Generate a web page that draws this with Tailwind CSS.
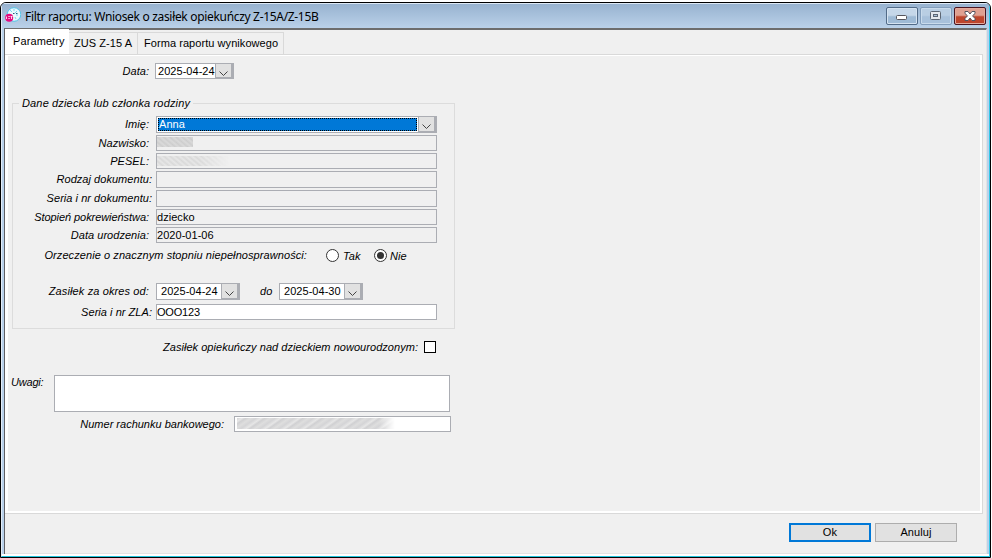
<!DOCTYPE html>
<html lang="pl">
<head>
  <meta charset="UTF-8">
  <meta name="viewport" content="width=device-width, initial-scale=1.0">
  <title>Filtr raportu</title>
  <script src="https://cdn.jsdelivr.net/npm/@tailwindcss/browser@4"></script>
</head>
<body class="w-[992px] h-[558px] overflow-hidden bg-white pt-[2px] font-['Liberation_Sans',sans-serif] text-[11px] leading-[14px] text-black">
  <!-- Window frame -->
  <div class="w-[991px] h-[556px] rounded-t-[6px] border border-black bg-[#b9d1ea] overflow-hidden">
    <div class="w-full h-full flex flex-col border-t border-l border-t-[#dce8f5] border-l-[#e4edf7] border-r border-r-[#35c8e8] border-b border-b-[#20c4dc]">

      <!-- Title bar -->
      <div class="h-[24px] shrink-0 flex items-start bg-linear-to-b from-[#98b3d0] to-[#bad1e9] pl-[3px] pr-[2px]">
        <svg class="mt-[3px] shrink-0" width="16" height="16" viewBox="0 0 16 16">
          <circle cx="9" cy="7.5" r="6.8" fill="#e9f8fd" stroke="#55c5e8" stroke-width="1"/>
          <path d="M5 3l2 2M9 2v2M12 4l-2 2M13 8h-2M11 12l-1-2" stroke="#7dd3ee" stroke-width="1"/>
          <path d="M8 6.500h1.500M11 6.500h1.500" stroke="#24597c" stroke-width="1.2"/>
          <circle cx="4.2" cy="10.7" r="4" fill="#e5097f"/>
          <path d="M1.500 9.500v2.500M3.300 9.500h1.500M3.300 11.500h1.500M5.500 9.500h2M6.500 9.500v2.500" stroke="#fff" stroke-width=".8"/>
        </svg>
        <span class="ml-[4px] mt-[5px] grow font-['Noto_Sans',sans-serif] text-[12px] leading-[16px] tracking-[-0.32px] whitespace-nowrap">Filtr raportu: Wniosek o zasiłek opiekuńczy Z-15A/Z-15B</span>
        <div class="flex mt-[3px] gap-[2px]">
          <button class="w-[32px] h-[18px] flex items-center justify-center rounded-[2px] border border-[#526b88] bg-linear-to-b from-[#c5d7e9] from-45% to-[#9ebad5] to-55% shadow-[inset_0_0_0_1px_#d5e3f1]">
            <svg class="mt-[2px]" width="12" height="6" viewBox="0 0 12 6"><rect x=".5" y="1.5" width="10" height="4" rx="1" fill="#fff" stroke="#55555c"/></svg>
          </button>
          <button class="w-[32px] h-[18px] flex items-center justify-center rounded-[2px] border border-[#829dbb] bg-linear-to-b from-[#b9cee3] from-45% to-[#a8c1db] to-55% shadow-[inset_0_0_0_1px_#c9dbec]">
            <svg width="12" height="10" viewBox="0 0 12 10"><rect x=".5" y=".5" width="10" height="8" rx="1" fill="#e4e8ed" stroke="#5d6673"/><rect x="3.5" y="3.5" width="4" height="2" fill="#a9c0d8" stroke="#5d6673"/></svg>
          </button>
          <button class="w-[32px] h-[18px] flex items-center justify-center rounded-[2px] border border-[#4a1420] bg-linear-to-b from-[#e0a091] from-45% to-[#bd452c] to-55% shadow-[inset_0_0_0_1px_#e3aa9d] mr-px">
            <svg width="12" height="10" viewBox="0 0 12 10"><path d="M1 .5h3L6 3 8 .5h3v2L8.500 4.800 11 7.500v2H8L6 7 4 9.500H1v-2l2.500-2.700L1 2.500z" fill="#fff" stroke="#53535f"/></svg>
          </button>
        </div>
      </div>

      <!-- Client area -->
      <div class="grow flex flex-col ml-[2px] mr-[2px] border-t-2 border-t-[#6d6d6d] border-l border-l-[#5f5f63] border-r border-r-[#e3e3e3] bg-[#f0f0f0]">
        <!-- Tabs -->
        <div class="h-[24px] shrink-0 flex items-end tracking-[0.06px]">
          <div class="w-[64px] h-[25px] relative z-10 bg-white pl-[8px] pt-[5px] whitespace-nowrap tracking-[0.1px]">Parametry</div>
          <div class="w-[69px] h-[22px] border-t border-r border-[#d9d9d9] pl-[5px] pt-[3px] whitespace-nowrap">ZUS Z-15 A</div>
          <div class="w-[146px] h-[22px] border-t border-r border-[#d9d9d9] pl-[6px] pt-[3px] whitespace-nowrap">Forma raportu wynikowego</div>
        </div>

        <!-- Parameters panel -->
        <div class="h-[460px] w-[978px] shrink-0 border-t border-r border-b border-[#d9d9d9]">
          <div class="h-full border-t border-l-[3px] border-r-2 border-b-2 border-white pt-[7px] pl-[4px] italic tracking-[0.04px]">
            <div class="flex h-[16px]">
              <span class="w-[137px] mr-[6px] text-right whitespace-nowrap pt-px">Data:</span>
              <div class="w-[79px] h-[16px] flex border border-[#abadb3] bg-white not-italic">
                <span class="grow pl-[2px] whitespace-nowrap">2025-04-24</span>
                <div class="w-[18px] flex items-center justify-center border-l border-r-2 border-b border-[#abadb3] bg-[#e1e1e1]"><svg class="mt-[7px]" width="9" height="6" viewBox="0 0 9 6"><path d="M.5.5l4 4 4-4" fill="none" stroke="#444"/></svg></div>
              </div>
            </div>

            <fieldset class="w-[443px] h-[233px] mt-[17px] border border-[#dcdcdc]">
              <legend class="ml-[6px] px-[3px] whitespace-nowrap tracking-[0.15px]">Dane dziecka lub członka rodziny</legend>
              <div class="flex h-[17px] mt-[6px]">
                <span class="w-[136px] mr-[7px] text-right whitespace-nowrap pt-px">Imię:</span>
                <div class="w-[281px] flex border border-[#abadb3] bg-white not-italic">
                  <div class="grow m-px border border-dotted border-black bg-[#0078d7] text-white leading-[11px]">Anna</div>
                  <div class="w-[18px] flex items-center justify-center border-l border-r-2 border-b border-[#abadb3] bg-[#e1e1e1]"><svg class="mt-[5px]" width="9" height="6" viewBox="0 0 9 6"><path d="M.5.5l4 4 4-4" fill="none" stroke="#444"/></svg></div>
                </div>
              </div>
              <div class="flex h-[16px] mt-[2px]">
                <span class="w-[136px] mr-[7px] text-right whitespace-nowrap pt-px">Nazwisko:</span>
                <div class="w-[281px] border border-[#abadb3] pt-px"><div class="w-[36px] h-[10px] bg-[repeating-linear-gradient(40deg,#cfcfcf_0px,#dadada_2px,#cccccc_4px)]"></div></div>
              </div>
              <div class="flex h-[16px] mt-[2px]">
                <span class="w-[136px] mr-[7px] text-right whitespace-nowrap pt-px">PESEL:</span>
                <div class="w-[281px] border border-[#abadb3] pt-[2px]"><div class="w-[72px] h-[10px] bg-[repeating-linear-gradient(40deg,#dadada_0px,#e7e7e7_2px,#d8d8d8_4px)] mask-r-from-60%"></div></div>
              </div>
              <div class="flex h-[17px] mt-[2px]">
                <span class="w-[139px] mr-[4px] text-right whitespace-nowrap pt-px">Rodzaj dokumentu:</span>
                <div class="w-[281px] border border-[#abadb3]"></div>
              </div>
              <div class="flex h-[17px] mt-[2px]">
                <span class="w-[139px] mr-[4px] text-right whitespace-nowrap pt-px">Seria i nr dokumentu:</span>
                <div class="w-[281px] border border-[#abadb3]"></div>
              </div>
              <div class="flex h-[16px] mt-[2px]">
                <span class="w-[136px] mr-[7px] text-right whitespace-nowrap pt-px tracking-[-0.06px]">Stopień pokrewieństwa:</span>
                <div class="w-[281px] border border-[#abadb3] not-italic">dziecko</div>
              </div>
              <div class="flex h-[16px] mt-[2px]">
                <span class="w-[136px] mr-[7px] text-right whitespace-nowrap pt-px">Data urodzenia:</span>
                <div class="w-[281px] border border-[#abadb3] not-italic">2020-01-06</div>
              </div>
              <div class="flex h-[14px] mt-[5px]">
                <span class="w-[294px] mr-[18px] text-right whitespace-nowrap tracking-[0.08px]">Orzeczenie o znacznym stopniu niepełnosprawności:</span>
                <svg width="15" height="14" viewBox="0 0 15 14"><circle cx="7.500" cy="7.500" r="6" fill="#fff" stroke="#333"/></svg>
                <span class="w-[30px] pl-[3px] pt-px">Tak</span>
                <svg class="ml-[3px]" width="15" height="14" viewBox="0 0 15 14"><circle cx="7.500" cy="7.500" r="6" fill="#fff" stroke="#333"/><circle cx="7.500" cy="7.500" r="3.500" fill="#333"/></svg>
                <span class="pl-[2px] pt-px">Nie</span>
              </div>
              <div class="flex h-[17px] mt-[21px]">
                <span class="w-[136px] mr-[7px] text-right whitespace-nowrap pt-px tracking-[0.12px]">Zasiłek za okres od:</span>
                <div class="w-[84px] flex border border-[#abadb3] bg-white not-italic">
                  <span class="grow pl-[4px] whitespace-nowrap">2025-04-24</span>
                  <div class="w-[18px] flex items-center justify-center border-l border-r-2 border-b border-[#abadb3] bg-[#e1e1e1]"><svg class="mt-[6px]" width="9" height="6" viewBox="0 0 9 6"><path d="M.5.5l4 4 4-4" fill="none" stroke="#444"/></svg></div>
                </div>
                <span class="w-[39px] pl-[20px] pt-px">do</span>
                <div class="w-[84px] flex border border-[#abadb3] bg-white not-italic">
                  <span class="grow pl-[4px] whitespace-nowrap">2025-04-30</span>
                  <div class="w-[18px] flex items-center justify-center border-l border-r-2 border-b border-[#abadb3] bg-[#e1e1e1]"><svg class="mt-[6px]" width="9" height="6" viewBox="0 0 9 6"><path d="M.5.5l4 4 4-4" fill="none" stroke="#444"/></svg></div>
                </div>
              </div>
              <div class="flex h-[16px] mt-[4px]">
                <span class="w-[139px] mr-[4px] text-right whitespace-nowrap pt-px">Seria i nr ZLA:</span>
                <div class="w-[281px] border border-[#abadb3] bg-white not-italic tracking-[-0.2px]">OOO123</div>
              </div>
            </fieldset>

            <div class="flex h-[13px] mt-[12px]">
              <span class="w-[406px] mr-[6px] -mt-px text-right whitespace-nowrap">Zasiłek opiekuńczy nad dzieckiem nowourodzonym:</span>
              <div class="w-[12px] h-[12px] border border-black bg-white"></div>
            </div>
            <div class="flex h-[37px] mt-[21px]">
              <span class="w-[42px] -ml-px mr-px tracking-[-0.2px]">Uwagi:</span>
              <div class="w-[396px] border border-[#abadb3] bg-white"></div>
            </div>
            <div class="flex h-[16px] mt-[4px]">
              <span class="w-[212px] mr-[10px] text-right whitespace-nowrap pt-px tracking-[0px]">Numer rachunku bankowego:</span>
              <div class="w-[217px] border border-[#abadb3] bg-white pl-[2px] pt-px"><div class="w-[158px] h-[11px] bg-[repeating-linear-gradient(145deg,#d4d4d6_0px,#e6e6e6_3px,#d0d0d2_5px,#dedede_8px,#d4d4d6_11px)] mask-r-from-90%"></div></div>
            </div>
          </div>
        </div>

        <!-- Footer buttons -->
        <div class="grow flex justify-end gap-[4px] pt-[9px] pr-[29px] border-b border-[#e3e3e3] tracking-[0.1px]">
          <button class="w-[82px] h-[19px] border-2 border-[#0078d7] bg-[#e1e1e1] pb-[2px]">Ok</button>
          <button class="w-[82px] h-[19px] border border-[#adadad] bg-[#e1e1e1] pb-[2px]">Anuluj</button>
        </div>
      </div>
      <div class="h-[2px] shrink-0 bg-white"></div>
    </div>
  </div>
</body>
</html>
